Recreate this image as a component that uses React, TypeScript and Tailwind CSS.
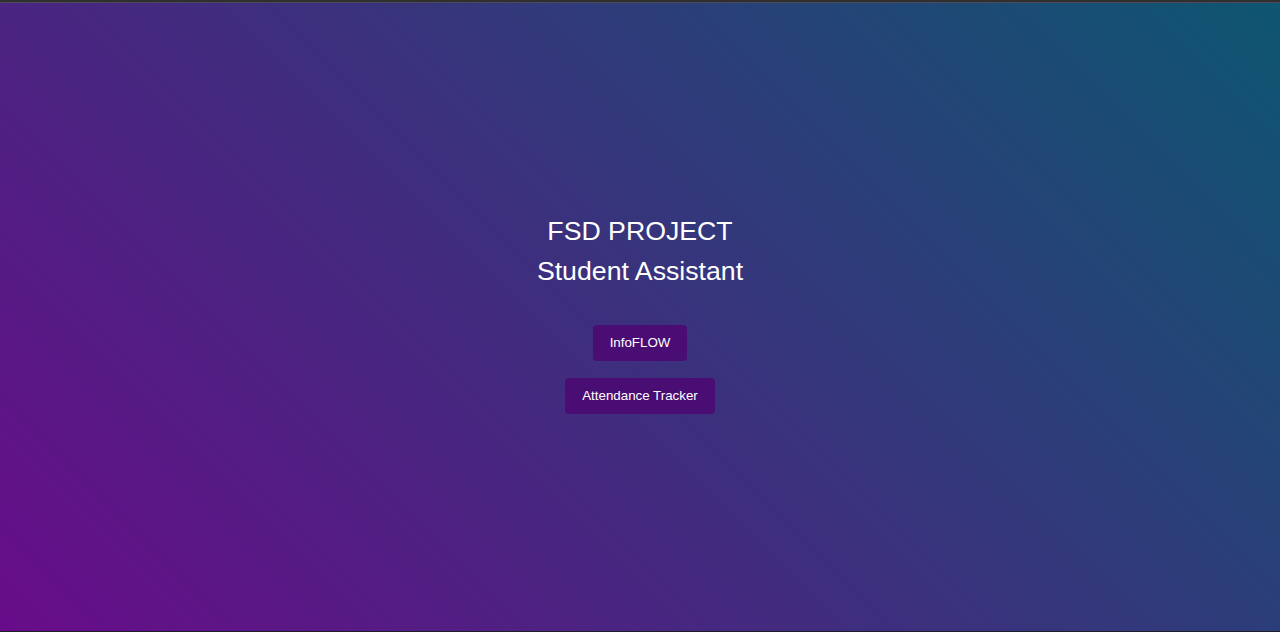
export default function App() {
  return (
    <div className="h-[632px] w-full flex flex-col bg-[#1e1e1e] font-['Liberation_Sans',Arial,sans-serif]">
      <div className="h-[2px] bg-[#2f2f2f]" />
      <div className="h-px bg-[#4d4a5a]" />
      <main className="flex-1 flex flex-col items-center justify-center pb-[9px] bg-[linear-gradient(45deg,#680c89,#0e5671)] text-white">
        <h1 className="text-[26.7px] leading-[40px] font-normal text-center">FSD PROJECT</h1>
        <h2 className="text-[26.7px] leading-[40px] font-normal text-center">Student Assistant</h2>
        <div className="mt-[34px] flex flex-col items-center gap-[17px]">
          <button className="h-9 px-[16.5px] rounded bg-[#4a0d73] text-[13.333px] text-white">InfoFLOW</button>
          <button className="h-9 px-[17px] rounded bg-[#4a0d73] text-[13.333px] text-white">Attendance Tracker</button>
        </div>
      </main>
      <div className="h-px bg-[#1e1e2a]" />
    </div>
  )
}
